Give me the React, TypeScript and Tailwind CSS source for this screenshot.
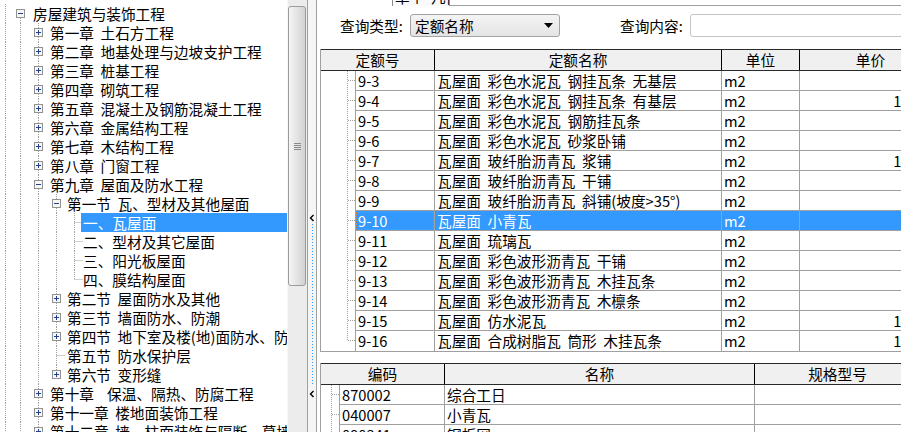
import React from 'react';

type Conn = { up?: boolean; down?: boolean; stub?: boolean; box?: 'plus' | 'minus' };

const V: Conn = { up: true, down: true };
const TEE_PLUS: Conn = { up: true, down: true, box: 'plus' };
const TEE_MINUS: Conn = { up: true, down: true, box: 'minus' };

type TreeRow = { label: string; cols: Conn[]; selected?: boolean };

const treeRows: TreeRow[] = [
  { label: '房屋建筑与装饰工程', cols: [V, { down: true, box: 'minus' }] },
  { label: '第一章 土石方工程', cols: [V, V, TEE_PLUS] },
  { label: '第二章 地基处理与边坡支护工程', cols: [V, V, TEE_PLUS] },
  { label: '第三章 桩基工程', cols: [V, V, TEE_PLUS] },
  { label: '第四章 砌筑工程', cols: [V, V, TEE_PLUS] },
  { label: '第五章 混凝土及钢筋混凝土工程', cols: [V, V, TEE_PLUS] },
  { label: '第六章 金属结构工程', cols: [V, V, TEE_PLUS] },
  { label: '第七章 木结构工程', cols: [V, V, TEE_PLUS] },
  { label: '第八章 门窗工程', cols: [V, V, TEE_PLUS] },
  { label: '第九章 屋面及防水工程', cols: [V, V, TEE_MINUS] },
  { label: '第一节 瓦、型材及其他屋面', cols: [V, V, V, TEE_MINUS] },
  { label: '一、瓦屋面', cols: [V, V, V, V, { up: true, down: true, stub: true }], selected: true },
  { label: '二、型材及其它屋面', cols: [V, V, V, V, { up: true, down: true, stub: true }] },
  { label: '三、阳光板屋面', cols: [V, V, V, V, { up: true, down: true, stub: true }] },
  { label: '四、膜结构屋面', cols: [V, V, V, V, { up: true, stub: true }] },
  { label: '第二节 屋面防水及其他', cols: [V, V, V, TEE_PLUS] },
  { label: '第三节 墙面防水、防潮', cols: [V, V, V, TEE_PLUS] },
  { label: '第四节 地下室及楼(地)面防水、防潮', cols: [V, V, V, TEE_PLUS] },
  { label: '第五节 防水保护层', cols: [V, V, V, { up: true, down: true, stub: true }] },
  { label: '第六节 变形缝', cols: [V, V, V, { up: true, box: 'plus' }] },
  { label: '第十章  保温、隔热、防腐工程', cols: [V, V, TEE_PLUS] },
  { label: '第十一章 楼地面装饰工程', cols: [V, V, TEE_PLUS] },
  { label: '第十二章 墙、柱面装饰与隔断、幕墙工程', cols: [V, V, TEE_PLUS] },
];

const labelPad = ['', 'pl-[4px]', 'pl-[3px]', 'pl-[2px]', '-ml-[2px] pl-[2px]'];

// SimSun spaces are half an em; two ascii spaces come close in Noto Sans CJK
const wide = (s: string) => s.split(' ').join('  ');

const quotas = [
  ['9-3', '瓦屋面 彩色水泥瓦 钢挂瓦条 无基层', '89.23'],
  ['9-4', '瓦屋面 彩色水泥瓦 钢挂瓦条 有基层', '112.35'],
  ['9-5', '瓦屋面 彩色水泥瓦 钢筋挂瓦条', '95.10'],
  ['9-6', '瓦屋面 彩色水泥瓦 砂浆卧铺', '76.50'],
  ['9-7', '瓦屋面 玻纤胎沥青瓦 浆铺', '105.62'],
  ['9-8', '瓦屋面 玻纤胎沥青瓦 干铺', '68.41'],
  ['9-9', '瓦屋面 玻纤胎沥青瓦 斜铺(坡度>35°)', '72.18'],
  ['9-10', '瓦屋面 小青瓦', '85.34'],
  ['9-11', '瓦屋面 琉璃瓦', '96.72'],
  ['9-12', '瓦屋面 彩色波形沥青瓦 干铺', '58.37'],
  ['9-13', '瓦屋面 彩色波形沥青瓦 木挂瓦条', '61.24'],
  ['9-14', '瓦屋面 彩色波形沥青瓦 木檩条', '63.75'],
  ['9-15', '瓦屋面 仿水泥瓦', '118.40'],
  ['9-16', '瓦屋面 合成树脂瓦 筒形 木挂瓦条', '132.86'],
];

const materials = [
  ['870002', '综合工日'],
  ['040007', '小青瓦'],
  ['090341', '钢板网'],
];

const DOT = '#a0a0a0';

function Connector({ w, cx, c }: { w: number; cx: number; c: Conn }) {
  const x = cx + 0.5;
  return (
    <svg width={w} height={19} className="block shrink-0">
      {c.up && <line x1={x} y1={0} x2={x} y2={10} stroke={DOT} strokeDasharray="1 1" />}
      {c.down && <line x1={x} y1={10} x2={x} y2={19} stroke={DOT} strokeDasharray="1 1" />}
      {c.stub && <line x1={x} y1={9.5} x2={w} y2={9.5} stroke={DOT} strokeDasharray="1 1" />}
      {c.box && (
        <g>
          <rect x={cx - 3.5} y={5.5} width={8} height={8} fill="#f6f6f6" stroke="#929292" />
          <line x1={cx - 2} y1={9.5} x2={cx + 3} y2={9.5} stroke="#22408c" />
          {c.box === 'plus' && <line x1={x} y1={7} x2={x} y2={12} stroke="#22408c" />}
        </g>
      )}
    </svg>
  );
}

function Tree() {
  return (
    <div className="w-[287px] shrink-0 overflow-hidden bg-white pt-[4px]">
      {treeRows.map((row) => {
        const level = row.cols.length - 1;
        return (
          <div key={row.label} className="flex h-[19px]">
            {row.cols.map((c, i) => (
              <Connector key={i} w={i === 0 ? 11 : 18} cx={i === 0 ? 5 : 9} c={c} />
            ))}
            <div
              className={`min-w-0 flex-1 overflow-hidden whitespace-pre leading-[19px] ${labelPad[level]} ${
                row.selected ? 'bg-[#3399ff] text-white' : 'text-black'
              }`}
            >
              {wide(row.label)}
            </div>
          </div>
        );
      })}
    </div>
  );
}

function ScrollBar() {
  return (
    <div className="w-[20px] shrink-0 border-l border-[#f7f7f7] bg-[#ececec] pt-[6px]">
      <div className="flex h-[280px] w-[18px] items-center justify-center rounded-[3px] border border-[#9b9b9b] bg-linear-to-r from-[#f5f5f5] to-[#d2d2d2]">
        <div className="flex flex-col gap-[1px]">
          <span className="block h-px w-[7px] bg-[#8a8a8a]" />
          <span className="block h-px w-[7px] bg-[#8a8a8a]" />
          <span className="block h-px w-[7px] bg-[#8a8a8a]" />
          <span className="block h-px w-[7px] bg-[#8a8a8a]" />
        </div>
      </div>
    </div>
  );
}

function Chevron() {
  return (
    <svg width={8} height={8} className="block">
      <polyline points="5.5,1 2.5,4 5.5,7" fill="none" stroke="#000" strokeWidth={1.4} />
    </svg>
  );
}

function Splitter() {
  return (
    <div className="flex w-[10px] shrink-0 flex-col border-x border-[#a0a0a0] bg-[#f5f5f5] pt-[214px]">
      <Chevron />
      <svg width={8} height={162} className="block">
        <line x1={4.5} y1={2} x2={4.5} y2={162} stroke="#3399ff" strokeDasharray="1 2" />
      </svg>
      <div className="h-[6px]" />
      <Chevron />
    </div>
  );
}

function QuotaTable() {
  return (
    <div className="mt-[12px] w-[700px] border-b border-l border-[#a0a0a0]">
      <div className="flex h-[22px] border-y border-[#2a2a2a] bg-[#f0f0f0] text-center leading-[20px]">
        <div className="w-[114px] shrink-0 border-r border-black">定额号</div>
        <div className="w-[287px] shrink-0 border-r border-black">定额名称</div>
        <div className="w-[78px] shrink-0 border-r border-black">单位</div>
        <div className="w-[142px] shrink-0 border-r border-black">单价</div>
      </div>
      {quotas.map(([code, name, price], i) => {
        const sel = i === 7;
        const last = i === quotas.length - 1;
        return (
          <div key={code} className="flex h-[20px] leading-[19px]">
            <svg width={34} height={20} className="block shrink-0">
              <line x1={26.5} y1={0} x2={26.5} y2={last ? 10 : 20} stroke={DOT} strokeDasharray="1 1" />
              <line x1={27} y1={9.5} x2={34} y2={9.5} stroke={DOT} strokeDasharray="1 1" />
            </svg>
            <div
              className={`w-[80px] shrink-0 border-x border-[#a0a0a0] pl-[2px] ${last ? '' : 'border-b'} ${
                sel ? 'bg-[#3399ff] text-white outline-1 outline-dotted outline-[#d0893c] -outline-offset-2' : ''
              }`}
            >
              {code}
            </div>
            <div
              className={`w-[287px] shrink-0 whitespace-pre border-r border-[#a0a0a0] pl-[2px] ${last ? '' : 'border-b'} ${
                sel ? 'bg-[#3399ff] text-white' : ''
              }`}
            >
              {wide(name)}
            </div>
            <div
              className={`w-[78px] shrink-0 border-r border-[#a0a0a0] pl-[2px] ${last ? '' : 'border-b'} ${
                sel ? 'bg-[#3399ff] text-white' : ''
              }`}
            >
              m2
            </div>
            <div
              className={`w-[142px] shrink-0 border-r border-[#a0a0a0] pr-[3px] text-right ${last ? '' : 'border-b'} ${
                sel ? 'bg-[#3399ff] text-white' : ''
              }`}
            >
              {price}
            </div>
          </div>
        );
      })}
    </div>
  );
}

function MaterialTable() {
  return (
    <div className="mt-[11px] w-[700px] border-l border-[#a0a0a0]">
      <div className="flex h-[22px] border-y border-[#2a2a2a] bg-[#f0f0f0] text-center leading-[20px]">
        <div className="w-[124px] shrink-0 border-r border-black">编码</div>
        <div className="w-[310px] shrink-0 border-r border-black">名称</div>
        <div className="w-[166px] shrink-0 border-r border-black">规格型号</div>
      </div>
      {materials.map(([code, name]) => (
        <div key={code} className="flex h-[20px] leading-[19px]">
          <svg width={18} height={20} className="block shrink-0">
            <line x1={10.5} y1={0} x2={10.5} y2={20} stroke={DOT} strokeDasharray="1 1" />
            <line x1={11} y1={9.5} x2={18} y2={9.5} stroke={DOT} strokeDasharray="1 1" />
          </svg>
          <div className="w-[106px] shrink-0 border-x border-b border-[#a0a0a0] pl-[2px]">{code}</div>
          <div className="w-[310px] shrink-0 border-r border-b border-[#a0a0a0] pl-[2px]">{name}</div>
          <div className="w-[166px] shrink-0 border-r border-b border-[#a0a0a0]" />
        </div>
      ))}
    </div>
  );
}

function RightPanel() {
  return (
    <div className="flex min-w-0 flex-1 flex-col overflow-hidden bg-white pl-[3px]">
      {/* clipped tab header */}
      <div className="-ml-[3px] flex h-[6px] shrink-0">
        <div className="w-[75px] shrink-0" />
        <div className="w-[58px] shrink-0 overflow-hidden border-x border-[#8c8c8c] bg-[#fafafa] pl-[2px]">
          <div className="-mt-[11px] whitespace-pre leading-[16px]">单个  几何</div>
        </div>
        <div className="flex-1 border-b border-[#a0a0a0]" />
      </div>

      {/* query bar */}
      <div className="mt-[8px] flex h-[23px] shrink-0 items-center pl-[20px]">
        <div className="w-[70px] shrink-0 leading-[23px]">查询类型:</div>
        <div className="flex h-[23px] w-[150px] shrink-0 items-center justify-between rounded-[3px] border border-[#a3a3a3] bg-linear-to-b from-[#f4f4f4] to-[#e4e4e4] pl-[4px] pr-[6px]">
          <span className="leading-[21px]">定额名称</span>
          <svg width={9} height={6} className="block">
            <polygon points="0,0 9,0 4.5,5" fill="#000" />
          </svg>
        </div>
        <div className="ml-[60px] w-[70px] shrink-0 leading-[23px]">查询内容:</div>
        <div className="h-[23px] w-[220px] shrink-0 rounded-[3px] border border-[#c4c4c4] bg-white" />
      </div>

      <QuotaTable />
      <MaterialTable />
    </div>
  );
}

export default function App() {
  return (
    <div className="flex h-[432px] w-[901px] overflow-hidden bg-white font-['Noto_Sans_CJK_SC',sans-serif] text-[14.67px] text-black">
      <Tree />
      <ScrollBar />
      <Splitter />
      <RightPanel />
    </div>
  );
}
